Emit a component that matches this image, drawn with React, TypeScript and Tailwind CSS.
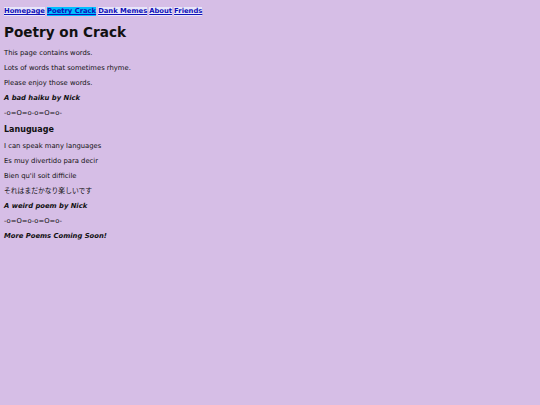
export default function App() {
  const links = [
    { label: "Homepage", active: false },
    { label: "Poetry Crack", active: true },
    { label: "Dank Memes", active: false },
    { label: "About", active: false },
    { label: "Friends", active: false },
  ];

  return (
    <main className="min-h-screen bg-[#d6bee6] px-[4px] pt-[7px] text-[#111] [font-family:'DejaVu_Sans','Noto_Sans_CJK_JP',sans-serif]">
      <nav className="flex gap-[2px] text-[6.8px] font-bold leading-[9px]">
        {links.map((l) => (
          <a
            key={l.label}
            href="#"
            className={`text-[#1010b8] underline ${l.active ? "bg-[#00bfff]" : "bg-[#e8e6fa]"}`}
          >
            {l.label}
          </a>
        ))}
      </nav>

      <h1 className="mt-[5px] text-[13.6px] font-bold leading-[22px]">Poetry on Crack</h1>

      <div className="mt-[3px] text-[6.8px] leading-[15px]">
        <p>This page contains words.</p>
        <p>Lots of words that sometimes rhyme.</p>
        <p>Please enjoy those words.</p>
        <p className="font-bold italic">A bad haiku by Nick</p>
        <p>-o=O=o-o=O=o-</p>

        <h3 className="text-[8px] font-bold leading-[18px]">Lanuguage</h3>

        <p>I can speak many languages</p>
        <p>Es muy divertido para decir</p>
        <p>Bien qu'il soit difficile</p>
        <p>それはまだかなり楽しいです</p>
        <p className="font-bold italic">A weird poem by Nick</p>
        <p>-o=O=o-o=O=o-</p>
        <p className="font-bold italic">More Poems Coming Soon!</p>
      </div>
    </main>
  );
}
